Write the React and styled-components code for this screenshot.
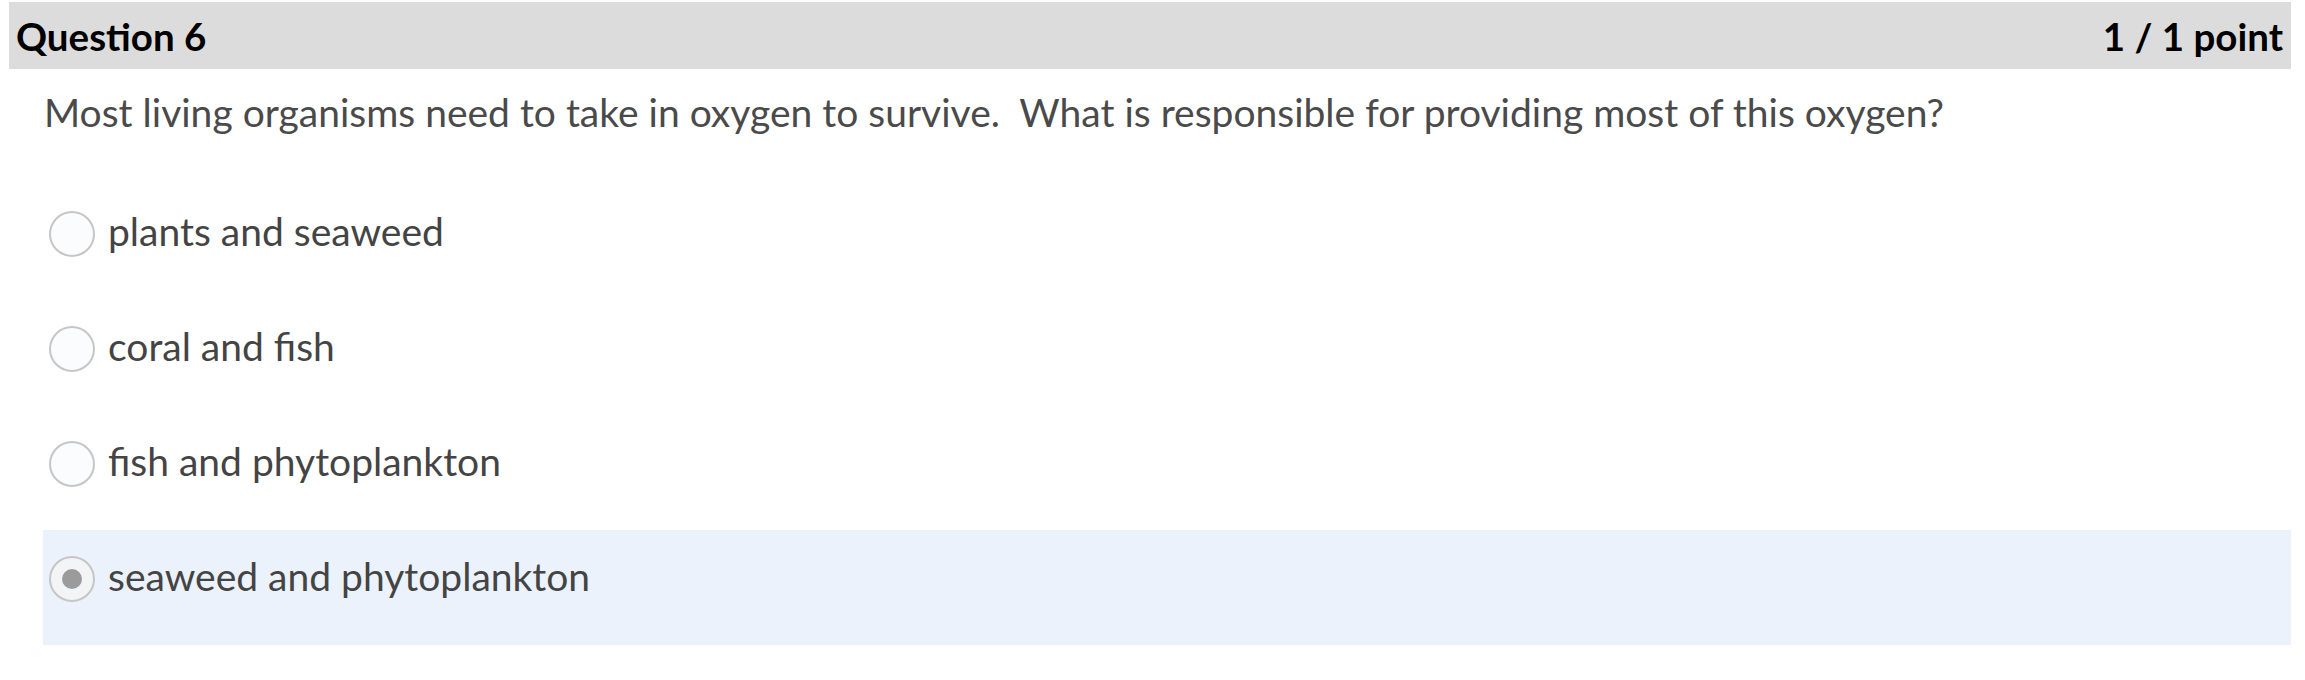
import React from "react"
import styled, { createGlobalStyle } from "styled-components"

const GlobalStyle = createGlobalStyle`
  html, body {
    margin: 0;
    padding: 0;
    background: #ffffff;
  }
  body {
    font-family: Lato, "Noto Sans", "Liberation Sans", sans-serif;
  }
`

export const QuizWrapper = styled.div`
  padding: 2px 14px 0 9px;
`

export const QuestionHeader = styled.div`
  height: 67px;
  display: flex;
  align-items: center;
  justify-content: space-between;
  padding: 0 8px 0 7px;
  background-color: #dcdcdc;
  color: #000;
  font-size: 38.5px;
  font-weight: 700;
  h2 {
    margin: 0;
    font-size: inherit;
    font-weight: inherit;
  }
`

export const QuestionBody = styled.div`
  padding-left: 34px;
`

export const QuestionText = styled.p`
  margin: 0;
  padding: 20px 0 0 1px;
  height: 93px;
  box-sizing: border-box;
  color: #4a4a4a;
  font-size: 39px;
  line-height: 46px;
`

export const Answers = styled.div`
  margin-top: 23px;
  display: flex;
  flex-direction: column;
`

export const AnswerRow = styled.label`
  height: 115px;
  box-sizing: border-box;
  display: flex;
  align-items: center;
  gap: 13px;
  padding: 26px 0 43px 6px;
  background-color: ${props => (props.$selected ? "#ebf2fb" : "transparent")};
  color: #444;
  font-size: 39px;
  cursor: pointer;
`

export const AnswerText = styled.span`
  line-height: 46px;
  margin-bottom: 6px;
`

export const Radio = styled.span`
  flex: none;
  width: 46px;
  height: 46px;
  box-sizing: border-box;
  border-radius: 50%;
  border: 2px solid #c6c6c6;
  background-color: ${props => (props.$checked ? "#f3f4f5" : "#fbfcfd")};
  display: flex;
  align-items: center;
  justify-content: center;
  &::after {
    content: "";
    display: ${props => (props.$checked ? "block" : "none")};
    width: 20px;
    height: 20px;
    border-radius: 50%;
    background-color: #9b9b9b;
  }
`

const answers = [
  "plants and seaweed",
  "coral and fish",
  "fish and phytoplankton",
  "seaweed and phytoplankton",
]

export default function App() {
  const selected = 3
  return (
    <>
      <GlobalStyle />
      <QuizWrapper>
        <QuestionHeader>
          <h2>Question 6</h2>
          <span>1 / 1 point</span>
        </QuestionHeader>
        <QuestionBody>
          <QuestionText>
            Most living organisms need to take in oxygen to survive.&nbsp; What is
            responsible for providing most of this oxygen?
          </QuestionText>
          <Answers>
            {answers.map((a, i) => (
              <AnswerRow key={a} $selected={i === selected}>
                <Radio $checked={i === selected} />
                <AnswerText>{a}</AnswerText>
              </AnswerRow>
            ))}
          </Answers>
        </QuestionBody>
      </QuizWrapper>
    </>
  )
}
